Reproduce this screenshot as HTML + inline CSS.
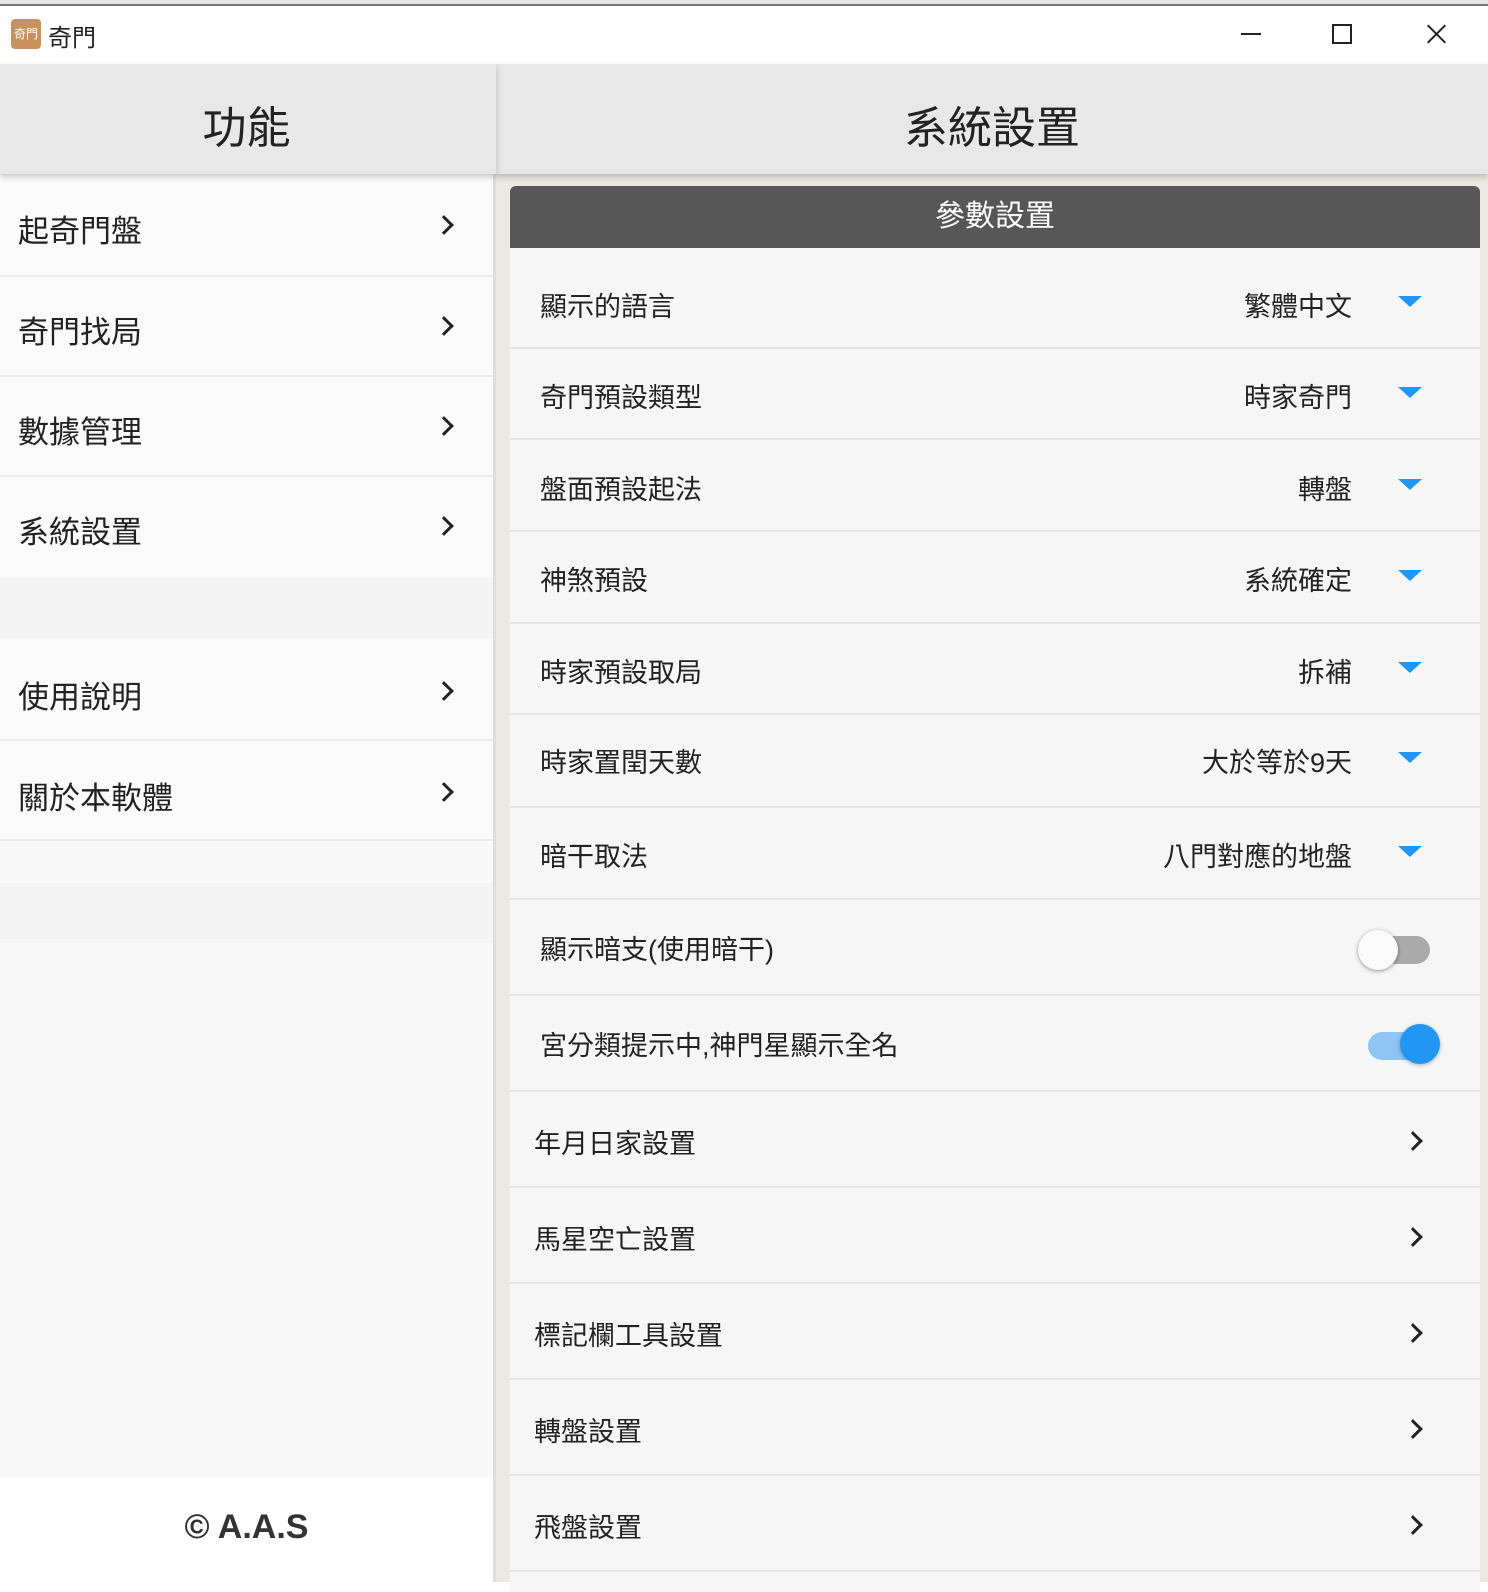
<!DOCTYPE html><html><head><meta charset="utf-8"><style>
*{margin:0;padding:0;box-sizing:border-box}
body{width:1488px;height:1582px;overflow:hidden;background:#fff;font-family:"Liberation Sans","Noto Sans CJK TC",sans-serif;color:#222;position:relative}
.a{position:absolute}
.chev{position:absolute;width:14px;height:14px;border-right:3px solid #222;border-top:3px solid #222;transform:rotate(45deg)}
.row{position:absolute;left:510px;width:970px;border-bottom:2px solid #e6e6e6;background:#f6f6f6}
.lab{position:absolute;left:30px;font-size:27px;color:#222}
.val{position:absolute;right:128px;font-size:27px;color:#222}
.tri{position:absolute;right:58px;width:0;height:0;border-left:12px solid transparent;border-right:12px solid transparent;border-top:11px solid #2196f3}
.li{position:absolute;left:0;width:496px;background:#fafafa;border-bottom:2px solid #ececec}
.li span{position:absolute;left:18px;font-size:31px;color:#222}
</style></head><body>
<div class="a" style="left:0;top:0;width:1488px;height:6px;background:#e8e8e8;border-bottom:2px solid #777"></div>
<div class="a" style="left:11px;top:19px;width:30px;height:30px;background:#c8925c;border-radius:4px;color:#fff;font-size:12px;line-height:30px;text-align:center">奇門</div>
<div class="a" style="left:48px;top:18px;font-size:24px">奇門</div>
<div class="a" style="left:1241px;top:33px;width:20px;height:2px;background:#222"></div>
<div class="a" style="left:1332px;top:24px;width:20px;height:20px;border:2px solid #222"></div>
<div class="a" style="left:1424px;top:33px;width:25px;height:2px;background:#222;transform:rotate(45deg)"></div>
<div class="a" style="left:1424px;top:33px;width:25px;height:2px;background:#222;transform:rotate(-45deg)"></div>
<!-- right bg -->
<div class="a" style="left:496px;top:64px;width:992px;height:1518px;background:#ebe8e2"></div>
<!-- left -->
<div class="a" style="left:0;top:64px;width:496px;height:1518px;background:#f9f9f9"></div>
<div class="a" style="left:0;top:64px;width:496px;height:110px;background:#e8e8e8;box-shadow:0 3px 6px rgba(0,0,0,.2);z-index:2"></div>
<div class="a" style="left:0;top:92px;width:493px;text-align:center;font-size:44px;z-index:3">功能</div>
<div class="li" style="top:174px;height:103px"><span style="top:32px">起奇門盤</span><div class="chev" style="left:437px;top:44px"></div></div>
<div class="li" style="top:277px;height:100px"><span style="top:30px">奇門找局</span><div class="chev" style="left:437px;top:42px"></div></div>
<div class="li" style="top:377px;height:100px"><span style="top:30px">數據管理</span><div class="chev" style="left:437px;top:42px"></div></div>
<div class="li" style="top:477px;height:101px;border:0"><span style="top:30px">系統設置</span><div class="chev" style="left:437px;top:42px"></div></div>
<div class="a" style="left:0;top:578px;width:496px;height:60px;background:#f4f4f4"></div>
<div class="li" style="top:638px;height:103px"><span style="top:34px">使用說明</span><div class="chev" style="left:437px;top:46px"></div></div>
<div class="li" style="top:741px;height:100px"><span style="top:32px">關於本軟體</span><div class="chev" style="left:437px;top:44px"></div></div>
<div class="a" style="left:0;top:883px;width:496px;height:60px;background:#f4f4f4"></div>
<div class="a" style="left:0;top:1478px;width:496px;height:104px;background:#fff"></div>
<div class="a" style="left:0;top:1508px;width:493px;text-align:center;font-size:34px;font-weight:bold;color:#333">© A.A.S</div>
<div class="a" style="left:493px;top:64px;width:3px;height:1518px;background:#ddd"></div>
<div class="a" style="left:496px;top:64px;width:992px;height:110px;background:#e8e8e8;box-shadow:0 3px 6px rgba(0,0,0,.2)"></div>
<div class="a" style="left:496px;top:92px;width:992px;text-align:center;font-size:44px">系統設置</div>
<div class="a" style="left:510px;top:186px;width:970px;height:62px;background:#575757;border-radius:6px 6px 0 0;color:#fff;font-size:30px;text-align:center;line-height:62px">參數設置</div>
<div class="row" style="top:248px;height:101px"><span class="lab" style="top:37px">顯示的語言</span><span class="val" style="top:37px">繁體中文</span><div class="tri" style="top:48px"></div></div>
<div class="row" style="top:349px;height:91px"><span class="lab" style="top:27px">奇門預設類型</span><span class="val" style="top:27px">時家奇門</span><div class="tri" style="top:38px"></div></div>
<div class="row" style="top:440px;height:92px"><span class="lab" style="top:28px">盤面預設起法</span><span class="val" style="top:28px">轉盤</span><div class="tri" style="top:39px"></div></div>
<div class="row" style="top:532px;height:92px"><span class="lab" style="top:27px">神煞預設</span><span class="val" style="top:27px">系統確定</span><div class="tri" style="top:38px"></div></div>
<div class="row" style="top:624px;height:91px"><span class="lab" style="top:27px">時家預設取局</span><span class="val" style="top:27px">拆補</span><div class="tri" style="top:38px"></div></div>
<div class="row" style="top:715px;height:93px"><span class="lab" style="top:26px">時家置閏天數</span><span class="val" style="top:26px">大於等於9天</span><div class="tri" style="top:37px"></div></div>
<div class="row" style="top:808px;height:92px"><span class="lab" style="top:27px">暗干取法</span><span class="val" style="top:27px">八門對應的地盤</span><div class="tri" style="top:38px"></div></div>
<div class="row" style="top:900px;height:96px"><span class="lab" style="top:28px">顯示暗支(使用暗干)</span>
<div class="a" style="left:852px;top:36px;width:68px;height:28px;border-radius:14px;background:#aaa"></div>
<div class="a" style="left:848px;top:30px;width:40px;height:40px;border-radius:50%;background:#fafafa;box-shadow:0 1px 4px rgba(0,0,0,.4)"></div></div>
<div class="row" style="top:996px;height:96px"><span class="lab" style="top:28px">宮分類提示中,神門星顯示全名</span>
<div class="a" style="left:858px;top:36px;width:68px;height:28px;border-radius:14px;background:#8ec5f5"></div>
<div class="a" style="left:890px;top:28px;width:40px;height:40px;border-radius:50%;background:#2196f3;box-shadow:0 1px 4px rgba(0,0,0,.3)"></div></div>
<div class="row" style="top:1092px;height:96px"><span class="lab" style="left:24px;top:30px">年月日家設置</span><div class="chev" style="left:896px;top:42px"></div></div>
<div class="row" style="top:1188px;height:96px"><span class="lab" style="left:24px;top:30px">馬星空亡設置</span><div class="chev" style="left:896px;top:42px"></div></div>
<div class="row" style="top:1284px;height:96px"><span class="lab" style="left:24px;top:30px">標記欄工具設置</span><div class="chev" style="left:896px;top:42px"></div></div>
<div class="row" style="top:1380px;height:96px"><span class="lab" style="left:24px;top:30px">轉盤設置</span><div class="chev" style="left:896px;top:42px"></div></div>
<div class="row" style="top:1476px;height:96px"><span class="lab" style="left:24px;top:30px">飛盤設置</span><div class="chev" style="left:896px;top:42px"></div></div>
<div class="row" style="top:1572px;height:20px;border:0"></div>
</body></html>
